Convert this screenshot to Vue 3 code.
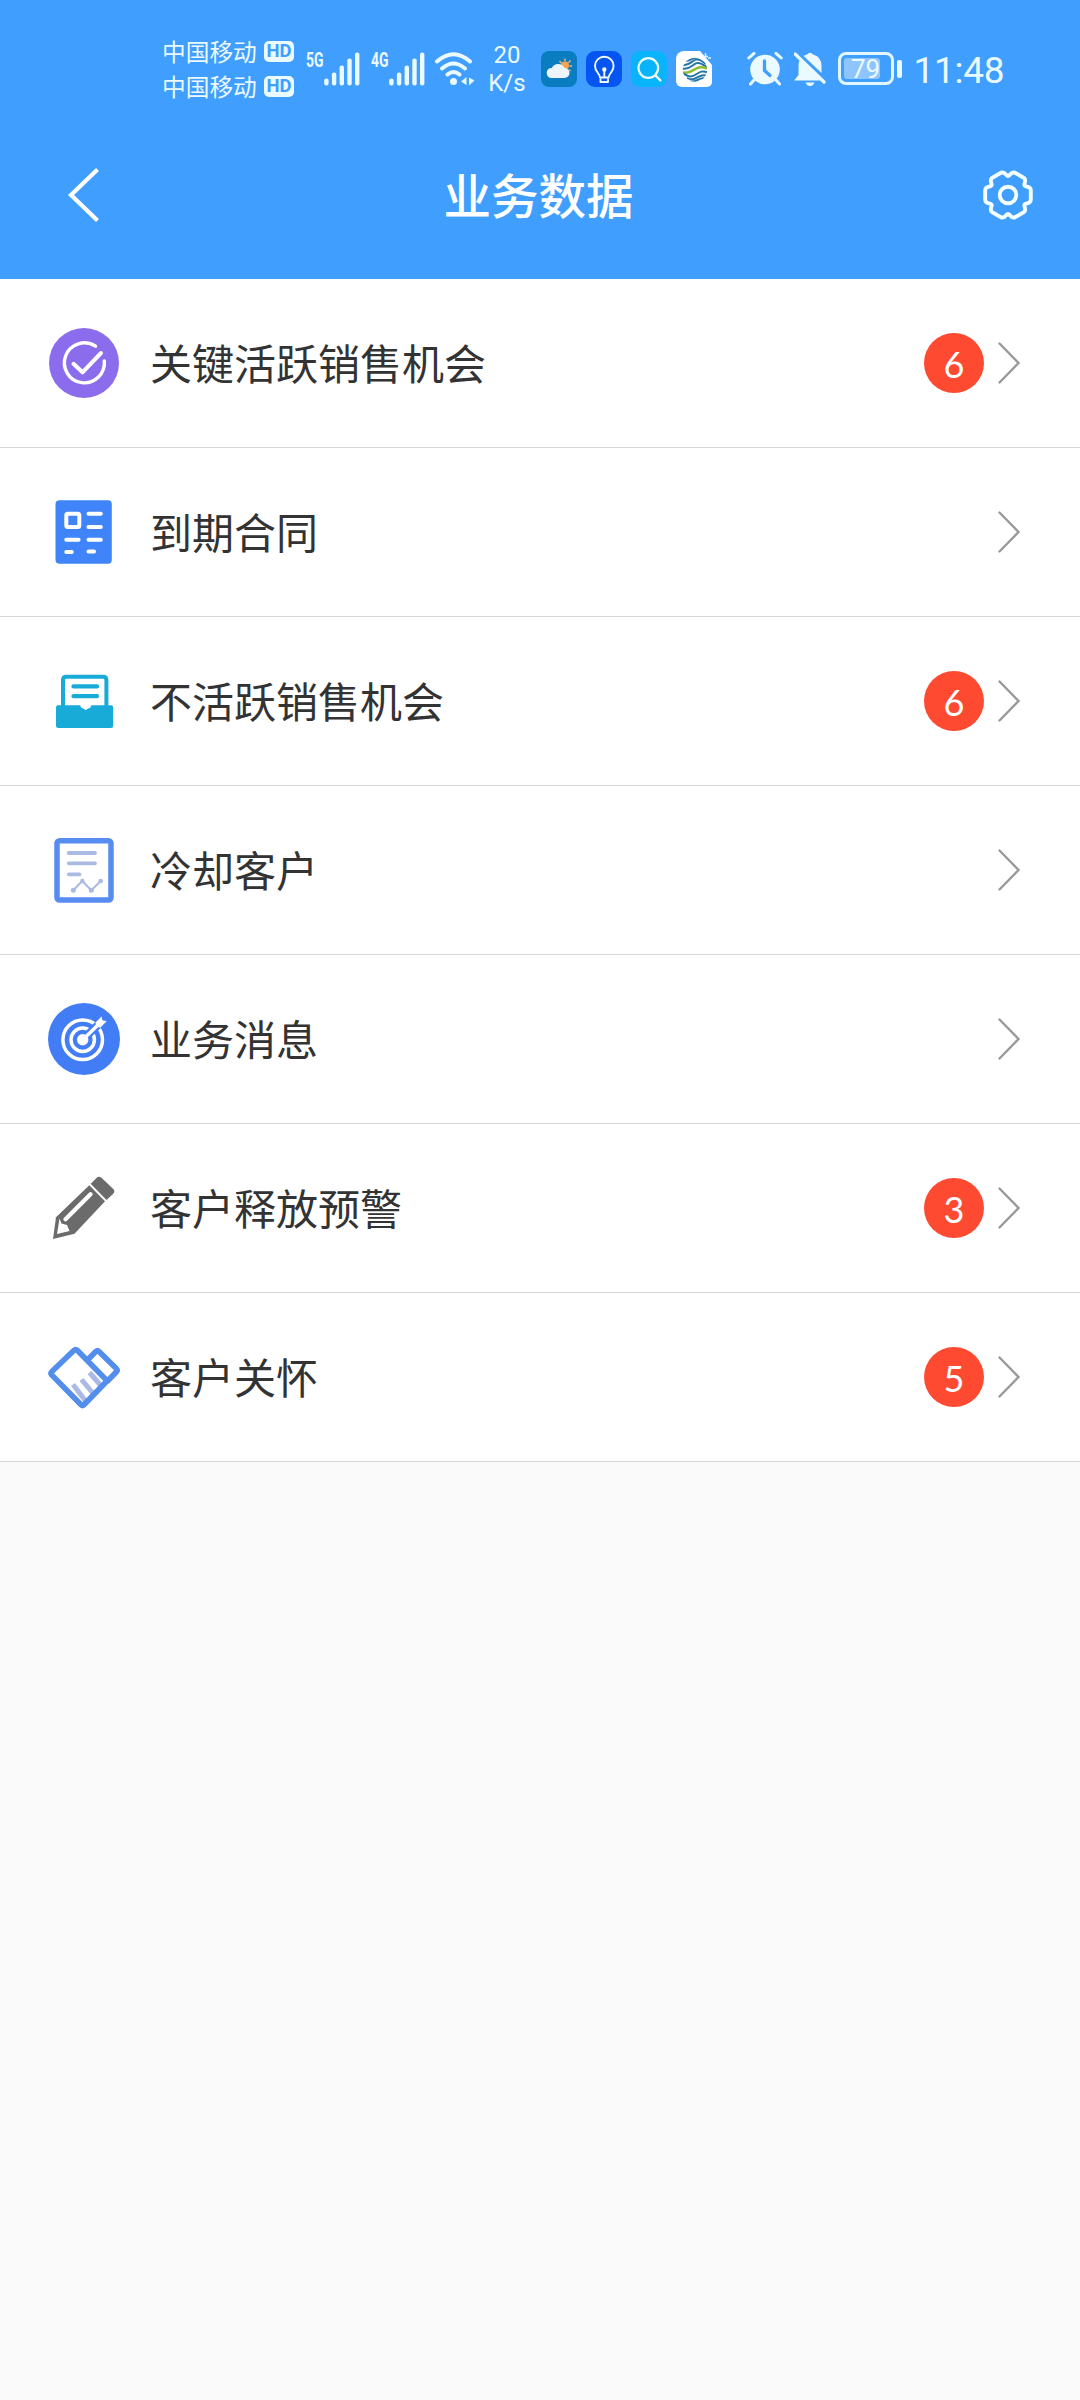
<script setup>
const rows = [
  { label: '关键活跃销售机会', icon: 'check', count: 6 },
  { label: '到期合同', icon: 'contract', count: 0 },
  { label: '不活跃销售机会', icon: 'inbox', count: 6 },
  { label: '冷却客户', icon: 'report', count: 0 },
  { label: '业务消息', icon: 'target', count: 0 },
  { label: '客户释放预警', icon: 'pencil', count: 3 },
  { label: '客户关怀', icon: 'care', count: 5 },
]

const signals = ['5G', '4G']
const bars = [7, 13, 20, 27, 33]

// Six wide lobes separated by rounded notches
const gear = Array.from({ length: 120 }, (_, i) => {
  const deg = i * 3
  const d = Math.min(deg % 60, 60 - (deg % 60))
  const flat = 23.6 * Math.cos(Math.PI / 12) / Math.cos(((30 - d) * Math.PI) / 180)
  const r = (d > 15 ? flat : 23.6) - 4.6 * Math.exp(-(d * d) / 75)
  const a = (deg * Math.PI) / 180
  return `${(28 + r * Math.sin(a)).toFixed(2)},${(28 - r * Math.cos(a)).toFixed(2)}`
}).join(' ')
</script>

<template>
  <div class="page">
    <header class="top">
      <div class="status">
        <div class="carriers">
          <div v-for="n in 2" :key="n" class="carrier">
            <span>中国移动</span><b class="hd">HD</b>
          </div>
        </div>
        <div v-for="s in signals" :key="s" class="signal">
          <span class="gen">{{ s }}</span>
          <svg width="36" height="34" viewBox="0 0 36 34">
            <rect v-for="(h, i) in bars" :key="h" :x="i * 7.7 + 0.2" :y="33.5 - h" width="4.4" :height="h" rx="2" fill="#eafaff" />
          </svg>
        </div>
        <svg class="wifi" width="42" height="36" viewBox="0 0 42 36" fill="none" stroke="#eafaff" stroke-width="4" stroke-linecap="round">
          <path d="M3 10.500Q19.500-4 36 10.500M8 17.500Q19.500 7.500 31 17.500M13.500 23.500Q19.500 18.500 25.500 23.500" />
          <circle cx="19.500" cy="30.500" r="3.500" fill="#eafaff" stroke="none" />
          <path d="M27 30.500l5.500-4.500v8zM35 26.500v8l5.500-5z" fill="#eafaff" stroke="none" />
        </svg>
        <div class="speed"><span>20</span><span>K/s</span></div>
        <div class="apps">
          <svg width="36" height="36" viewBox="0 0 36 36">
            <rect width="36" height="36" rx="8" fill="#0a7cc0" />
            <g stroke="#f5b878" stroke-width="1.300"><path d="M24 7.500v3M18.500 10l2 2.200M29.500 9.500l-2 2.300M31 15h-2.500M29.500 20l-2-1.500" /></g>
            <circle cx="24" cy="14.500" r="4" fill="#f7a452" />
            <path d="M10.500 27a5 5 0 0 1 .3-10 7 7 0 0 1 12.700 0 5 5 0 0 1 0 10z" fill="#edf5fc" />
          </svg>
          <svg width="36" height="36" viewBox="0 0 36 36">
            <rect width="36" height="36" rx="9" fill="#0755f0" />
            <g fill="none" stroke="#f2faff" stroke-width="1.900" stroke-linecap="round" stroke-linejoin="round">
              <path d="M14 26.500c0-4-5-5.500-5-11.500a9.300 9.300 0 0 1 18.600 0c0 6-5 7.500-5 11.500zM14.500 28.500v2.500h7.500v-2.500M18.300 20v6" />
            </g><circle cx="18.300" cy="18.500" r="2.200" fill="#f2faff" />
          </svg>
          <svg width="36" height="36" viewBox="0 0 36 36">
            <rect width="36" height="36" rx="9" fill="#09b4fb" />
            <circle cx="17.300" cy="17" r="9.800" fill="none" stroke="#eefcff" stroke-width="2.200" />
            <path d="M24.500 24.500l5 5" stroke="#eefcff" stroke-width="2.400" stroke-linecap="round" />
          </svg>
          <svg width="36" height="36" viewBox="0 0 36 36">
            <clipPath id="emblem"><ellipse cx="19" cy="18.800" rx="12.200" ry="12" /></clipPath>
            <path d="M8 0H24L36 14V31a5 5 0 0 1-5 5H6a6 6 0 0 1-6-6V8a8 8 0 0 1 8-8z" fill="#fff" />
            <path d="M27 5.500h5M29.500 2v6M32 7h3" stroke="#d9f4ff" stroke-width="1.300" />
            <g clip-path="url(#emblem)" fill="none" stroke-width="2">
              <path d="M6 14C15 16 17 5 25 9.500L30 13M9 9.500C15 11 16 5 23 6.500" stroke="#2476a8" />
              <path d="M6 17.500C16 20 18 8.500 25.500 13L31 16" stroke="#2476a8" />
              <path d="M6.500 21.500C17 24 19 12.500 31 17.500" stroke="#8dbd2f" stroke-width="2.700" />
              <path d="M7 22.500L12 25C20 28 22 17 31.500 21.500M11 27C20 32 23 21 31 25M14 30.500C21 32 23 25.500 29 27.500" stroke="#2476a8" />
            </g>
          </svg>
        </div>
        <svg class="alarm" width="36" height="36" viewBox="0 0 36 36" fill="none" stroke="#eafaff" stroke-linecap="round">
          <circle cx="18" cy="18.500" r="14.800" fill="#eafaff" stroke="none" />
          <path d="M1.800 7L7 2.300M34.200 7L29 2.300M7 29l-3.500 4M29 29l3.500 4" stroke-width="3" />
          <path d="M17.500 10v9.500l5.500 5" stroke="#409eff" stroke-width="3.300" />
        </svg>
        <svg class="bell" width="32" height="36" viewBox="0 0 32 36">
          <path d="M0 29.500L4.500 24V15Q4.500 5.500 13 3.500Q16 0 19 3.500Q27.500 5.500 27.500 15V24L31 29.500zM11.500 31.500h9Q19 35 16 35T11.500 31.500z" fill="#eafaff" />
          <path d="M1.500 0L34 31" stroke="#409eff" stroke-width="4" />
          <path d="M1 3L30 31" stroke="#eafaff" stroke-width="3.300" stroke-linecap="round" />
        </svg>
        <div class="battery"><div class="cell"><span>79</span></div><i></i></div>
        <span class="time">11:48</span>
      </div>
      <nav class="nav">
        <svg width="40" height="60" viewBox="0 0 40 60"><path d="M32.500 4.500L6 30l26.500 25.500" fill="none" stroke="#fff" stroke-width="4.200" /></svg>
        <h1>业务数据</h1>
        <svg width="56" height="56" viewBox="0 0 56 56" fill="none" stroke="#f4ffff" stroke-width="3.900" stroke-linejoin="round">
          <polygon :points="gear" /><circle cx="28" cy="28" r="8.300" />
        </svg>
      </nav>
    </header>

    <main>
      <div v-for="row in rows" :key="row.label" class="row">
        <svg class="icon" width="72" height="72" viewBox="0 0 72 72" fill="none" stroke-linecap="round" stroke-linejoin="round">
          <template v-if="row.icon === 'check'">
            <circle cx="36" cy="36" r="35" fill="#8b6cec" />
            <path d="M47.500 19.200A20 20 0 1 0 56.300 34" stroke="#fff" stroke-width="3.400" />
            <path d="M25.500 36.800L34.500 45.300L53 26" stroke="#fff" stroke-width="4" />
          </template>
          <template v-else-if="row.icon === 'contract'">
            <rect x="7.500" y="4.300" width="56.300" height="63.400" rx="4" fill="#4084fa" />
            <g stroke="#fff" stroke-width="4">
              <rect x="18.300" y="17.700" width="13" height="13.200" rx="1.500" />
              <path d="M40.500 17.700h12.300M40.500 31h12.300M18.300 43.700h12.300M40.500 43.700h12.300M18.300 56h5.500M40.500 55.500h5.500" />
            </g>
          </template>
          <template v-else-if="row.icon === 'inbox'">
            <path d="M15 42V15Q15 11.700 18.500 11.700H55Q58.400 11.700 58.400 15V42" stroke="#18abd8" stroke-width="4" />
            <path d="M10 40.300H32L33.500 43L35.500 43.500L37.700 45.200L40 43.500L42 43L43.500 40.300H63Q65.200 40.300 65.200 42.500V60.500Q65.200 63 62.700 63H10.500Q8 63 8 60.500V42.500Q8 40.300 10 40.300Z" fill="#18abd8" />
            <path d="M25.500 21.400H49M25.500 31.200H49" stroke="#18abd8" stroke-width="4.300" />
          </template>
          <template v-else-if="row.icon === 'report'">
            <rect x="9" y="6.700" width="54" height="59.300" rx="2.500" stroke="#578df0" stroke-width="5.500" />
            <g stroke="#abbae3">
              <path d="M20.800 19H47M20.800 29.300H47M20.800 40.300H31.500" stroke-width="3.800" />
              <path d="M25.300 56.300L34.300 47L43.300 56.300L52.700 47" stroke-width="2" />
            </g>
            <g fill="#abbae3"><circle cx="25.300" cy="56.300" r="2.500" /><circle cx="34.300" cy="47" r="2.200" /><circle cx="43.300" cy="56.300" r="2.500" /><circle cx="52.700" cy="47" r="2.300" /></g>
          </template>
          <template v-else-if="row.icon === 'target'">
            <circle cx="36" cy="36" r="36" fill="#437df5" />
            <g stroke="#fff" stroke-width="3.500"><circle cx="34.700" cy="36.700" r="19.800" /><circle cx="34.700" cy="36.700" r="11.700" /></g>
            <path d="M34.700 36.700L51 21" stroke="#437df5" stroke-width="8" stroke-linecap="butt" />
            <circle cx="34.700" cy="36.700" r="5.700" fill="#fff" />
            <path d="M34.700 36.700L51 21" stroke="#fff" stroke-width="3.500" />
            <path d="M47.500 19.500L53.500 13.500L54.500 17.500L58.800 18L52.500 24.500L48 24Z" fill="#fff" />
          </template>
          <template v-else-if="row.icon === 'pencil'">
            <path d="M5 67L8 45.300L41.300 13.300L57 29.300L26.500 61.700Z" fill="#6b6b6b" />
            <path d="M42.700 11.800L48.500 6Q51 3.500 54 6.300L65.300 17Q67.500 19.500 65 22L58.500 28Z" fill="#6b6b6b" />
            <path d="M17.500 47.300L42.500 22.300" stroke="#fff" stroke-width="4.300" />
            <path d="M11.500 46.500L13.500 51.500L19 53L21.500 59L9 62Z" fill="#fff" />
          </template>
          <template v-else>
            <g stroke="#aab9e5" stroke-width="5" stroke-linecap="butt"><path d="M25 43.500L38 60.500M33.500 38.500L46 53.500M41.500 31.500L54 46" /></g>
            <g stroke="#548eed" stroke-width="5.600">
              <path d="M25.800 9.500L3.700 30.800Q2.300 32.300 3.700 33.900L33 63.800Q34.500 65.200 36 63.800L57.500 41.500Q59 39.800 57.500 38.200L29.500 9.500Q27.700 7.800 25.800 9.500Z" />
              <path d="M40.500 18L47.800 10.500Q49.400 9 51 10.500L68.500 27.800Q69.800 29.200 68.500 30.700L59.500 40" />
            </g>
          </template>
        </svg>
        <span class="label">{{ row.label }}</span>
        <span v-if="row.count" class="badge">{{ row.count }}</span>
        <svg class="chevron" width="24" height="44" viewBox="0 0 24 44"><path d="M2.500 2.500L21.500 22L2.500 41.500" fill="none" stroke="#999" stroke-width="2.400" stroke-linecap="round" /></svg>
      </div>
    </main>
  </div>
</template>

<style>
body { background: #fafafa; }
</style>

<style scoped>
.page {
  width: 1080px;
  min-height: 2400px;
  background: #fafafa;
  font-family: "Noto Sans CJK SC", sans-serif;
  color: #333;
}
.page svg { display: block; flex: none; }
.top { height: 279px; background: #409eff; color: #fff; }
.status {
  display: flex;
  align-items: center;
  height: 137px;
  padding-left: 162px;
  color: #eafaff;
}
.carriers { display: flex; flex-direction: column; width: 134px; }
.carrier { display: flex; align-items: center; justify-content: space-between; height: 35px; font-size: 23.7px; white-space: nowrap; }
.carrier span { line-height: 35px; }
.hd {
  width: 30px;
  height: 21px;
  margin-right: 2px;
  border-radius: 5px;
  background: #eafaff;
  color: #409eff;
  font: bold 18.500px/21.500px Roboto, sans-serif;
  text-align: center;
}
.signal { display: flex; width: 64.500px; }
.carriers + .signal { margin-left: 10px; }
.gen { width: 18px; height: 20px; font: bold 20.500px/16px Roboto, sans-serif; transform: scaleX(.68); transform-origin: 0 0; }
.wifi { margin-left: -1px; }
.speed {
  display: flex;
  flex-direction: column;
  width: 44px;
  margin-left: 9px;
  padding-top: 1px;
  font: 24px/28.500px Roboto, sans-serif;
  text-align: center;
}
.apps { display: flex; gap: 9px; margin-left: 12px; }
.alarm { margin-left: 35px; }
.bell { margin-left: 11px; }
.battery { display: flex; align-items: center; gap: 3px; margin-left: 12px; }
.cell {
  box-sizing: border-box;
  width: 56px;
  height: 33px;
  padding: 3px;
  border: 3px solid #e2f6ff;
  border-radius: 8px;
}
.cell span {
  display: block;
  width: 36px;
  height: 21px;
  border-radius: 3px;
  background: #8fc5ff;
  font: 26px/22px Roboto, sans-serif;
  text-indent: 7px;
}
.battery i { width: 4.500px; height: 18px; border-radius: 2px; background: #eafaff; }
.time { margin-left: 12px; padding-top: 4px; font: 37px/44px Roboto, sans-serif; letter-spacing: -.3px; }
.nav {
  display: flex;
  align-items: center;
  justify-content: space-between;
  height: 116px;
  padding: 0 44px 0 65px;
}
.nav h1 { margin: 0 0 0 -8px; padding-bottom: 2px; font-size: 47.500px; line-height: 70px; font-weight: 500; }
.row {
  display: flex;
  align-items: center;
  box-sizing: border-box;
  height: 169px;
  padding: 0 59px 0 48px;
  border-bottom: 1px solid #d6d6d6;
  background: #fff;
}
.label { flex: 1; margin-left: 30px; padding-bottom: 3px; font-size: 42px; line-height: 60px; }
.badge {
  width: 60px;
  height: 60px;
  border-radius: 50%;
  background: #ff4a32;
  color: #fff;
  font: 36px/63px Lato, sans-serif;
  text-align: center;
}
.chevron { margin-left: 13px; }
</style>
